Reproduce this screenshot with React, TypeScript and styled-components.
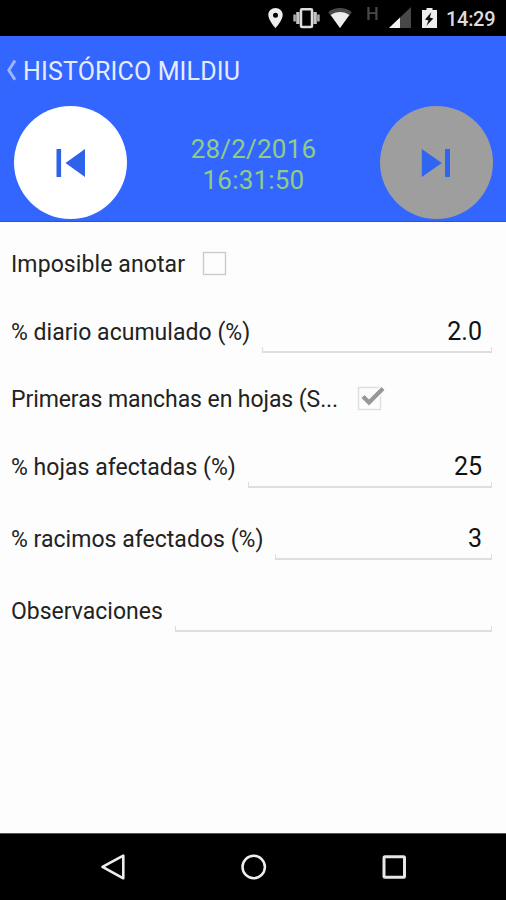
import React from "react";
import styled, { createGlobalStyle } from "styled-components";

const GlobalStyle = createGlobalStyle`
  *, *::before, *::after { box-sizing: border-box; }
  body { margin: 0; background: #fdfdfd; font-family: Roboto, sans-serif; }
`;

const Screen = styled.div`
  display: flex;
  flex-direction: column;
  width: 506px;
  height: 900px;
  overflow: hidden;
  background: #fdfdfd;
`;

const StatusBar = styled.header`
  display: flex;
  align-items: flex-start;
  justify-content: flex-end;
  height: 36px;
  padding: 7px 10px 0 0;
  background: #000;
`;

const StatusIcon = styled.svg<{ $gap: number }>`
  display: block;
  flex: none;
  margin-right: ${(p) => p.$gap}px;
`;

const NetworkType = styled.span`
  width: 13px;
  margin: -2px 10px 0 0;
  color: #484848;
  font-size: 18px;
  font-weight: 500;
  line-height: 17px;
`;

const Clock = styled.time`
  width: 50px;
  color: #dcdcdc;
  font-size: 20px;
  font-weight: 500;
  line-height: 24px;
  white-space: nowrap;
  letter-spacing: -0.3px;
`;

const AppHeader = styled.section`
  flex: none;
  height: 186px;
  background: #3366ff;
  border-bottom: 1px solid #1558f2;
`;

const TitleBar = styled.div`
  display: flex;
  align-items: center;
  height: 70px;
  padding-left: 5px;
`;

const Title = styled.h1`
  margin: 0 0 0 6px;
  color: #e6ecff;
  font-size: 25px;
  font-weight: 400;
  line-height: 30px;
  letter-spacing: 0.15px;
  padding-top: 1px;
  white-space: nowrap;
`;

const Pager = styled.div`
  display: flex;
  align-items: center;
  justify-content: space-between;
  height: 113px;
  padding: 0 13px 0 14px;
`;

const RoundButton = styled.button<{ $color: string }>`
  display: flex;
  align-items: center;
  justify-content: center;
  width: 113px;
  height: 113px;
  padding: 0;
  border: 0;
  border-radius: 50%;
  background: ${(p) => p.$color};
`;

const Timestamp = styled.div`
  color: #92cc83;
  font-size: 26px;
  line-height: 31px;
  letter-spacing: 0.2px;
  text-align: center;
  padding-top: 4px;
`;

const Form = styled.main`
  display: flex;
  flex: 1;
  flex-direction: column;
  padding: 8px 14px 0 11px;
`;

const Row = styled.div<{ $height: number }>`
  display: flex;
  align-items: center;
  height: ${(p) => p.$height}px;
`;

const Label = styled.label<{ $width: number; $spacing: number }>`
  flex: none;
  width: ${(p) => p.$width}px;
  padding-top: 2px;
  color: #222;
  font-size: 23px;
  line-height: 28px;
  letter-spacing: ${(p) => p.$spacing}px;
  white-space: nowrap;
`;

const Field = styled.div`
  display: flex;
  flex: 1;
  flex-direction: column;
  height: 42px;
`;

const Value = styled.span`
  flex: 1;
  padding-right: 10px;
  color: #111;
  font-size: 25px;
  line-height: 42px;
  text-align: right;
`;

const Underline = styled.div`
  flex: none;
  height: 6px;
  margin-top: -6px;
  border: 1px solid #dcdcdc;
  border-top: 0;
  border-bottom-width: 2px;
  border-bottom-color: #dedede;
`;

const NavigationBar = styled.nav`
  display: flex;
  align-items: flex-start;
  justify-content: space-between;
  height: 67px;
  padding: 20px 99px 0 100px;
  background: #000;
  border-top: 1px solid #555;
`;

const PinIcon = () => (
  <StatusIcon $gap={10} width="15" height="22" viewBox="0 0 15 22">
    <path fill="#eee" fillRule="evenodd" d="M7.5 1C3.5 1 .3 4.1.3 8c0 5.2 7.2 13.2 7.2 13.2S14.7 13.2 14.7 8c0-3.9-3.2-7-7.2-7Zm0 4.7a2.5 2.5 0 1 1 0 5 2.5 2.5 0 0 1 0-5Z" />
  </StatusIcon>
);

const VibrateIcon = () => (
  <StatusIcon $gap={8} width="27" height="22" viewBox="0 0 27 22">
    <rect x="8" y="2.3" width="11" height="17.6" rx="1" fill="none" stroke="#ddd" strokeWidth="2.5" />
    <path d="M4.9 5v12M22.1 5v12" stroke="#c4c4c4" strokeWidth="3.4" />
    <path d="M1.6 7.5v7M25.4 7.5v7" stroke="#aaa" strokeWidth="2.6" />
  </StatusIcon>
);

const WifiIcon = () => (
  <StatusIcon $gap={14} width="24" height="22" viewBox="0 0 24 22">
    <path fill="#4a4a4a" d="M.2 5.2C7-.4 17-.4 23.8 5.2L12 21Z" />
    <path fill="#eee" d="M2.7 8.1c5.5-4.3 13.1-4.3 18.6 0L12 20.9Z" />
  </StatusIcon>
);

const SignalIcon = () => (
  <StatusIcon $gap={11} width="22" height="22" viewBox="0 0 22 22">
    <path fill="#484848" d="M22 0v21H0Z" />
    <path fill="#f4f4f4" d="M11 10.5V21H0Z" />
  </StatusIcon>
);

const BatteryIcon = () => (
  <StatusIcon $gap={9} width="15" height="22" viewBox="0 0 15 22">
    <path fill="#eee" d="M4.5 1h6v2H15v18H0V3h4.5Z" />
    <path fill="#111" d="M9.3 5.3 3 12.5l3.5.9-2.1 5.3 7-7.2-3.6-.9Z" />
  </StatusIcon>
);

const BackChevron = () => (
  <svg width="12" height="24" viewBox="0 0 12 24">
    <path d="M10 1.5 3.8 11.3l6.2 9.5" fill="none" stroke="#9db5fb" strokeWidth="3" />
  </svg>
);

const PreviousIcon = () => (
  <svg width="30" height="28" viewBox="0 0 30 28">
    <path fill="#2f62ea" d="M.5 0h4.6v28H.5ZM29 0v28L9.5 14Z" />
  </svg>
);

const NextIcon = () => (
  <svg width="30" height="28" viewBox="0 0 30 28">
    <path fill="#2f65ef" d="M.8 0v28l20-14ZM24 0h5v28h-5Z" />
  </svg>
);

const Checkbox = ({ checked = false }: { checked?: boolean }) => (
  <svg width="28" height="28" viewBox="0 0 28 28" role="checkbox" aria-checked={checked}>
    <rect x="1.5" y="2.5" width="22" height="22" fill="none" stroke={checked ? "#dedede" : "#cbcbcb"} strokeWidth="1.4" />
    {checked && (
      <>
        <path d="m6 11.6 6 6L26 3.5" fill="none" stroke="#fdfdfd" strokeWidth="7" />
        <path d="m6 11.6 6 6L26 3.5" fill="none" stroke="#989898" strokeWidth="4.2" />
      </>
    )}
  </svg>
);

interface Entry {
  label: string;
  width: number;
  height: number;
  spacing: number;
  value?: string;
  checked?: boolean;
}

const entries: Entry[] = [
  { label: "Imposible anotar", width: 191, height: 68, spacing: 0.1, checked: false },
  { label: "% diario acumulado (%)", width: 251, height: 68, spacing: 0.03, value: "2.0" },
  { label: "Primeras manchas en hojas (S...", width: 346, height: 65, spacing: -0.08, checked: true },
  { label: "% hojas afectadas (%)", width: 237, height: 72, spacing: 0.03, value: "25" },
  { label: "% racimos afectados (%)", width: 264, height: 72, spacing: 0.03, value: "3" },
  { label: "Observaciones", width: 164, height: 72, spacing: 0, value: "" },
];

export default function App() {
  return (
    <>
      <GlobalStyle />
      <Screen>
        <StatusBar>
          <PinIcon />
          <VibrateIcon />
          <WifiIcon />
          <NetworkType>H</NetworkType>
          <SignalIcon />
          <BatteryIcon />
          <Clock>14:29</Clock>
        </StatusBar>
        <AppHeader>
          <TitleBar>
            <BackChevron />
            <Title>HISTÓRICO MILDIU</Title>
          </TitleBar>
          <Pager>
            <RoundButton $color="#fff" aria-label="Anterior">
              <PreviousIcon />
            </RoundButton>
            <Timestamp>
              28/2/2016
              <br />
              16:31:50
            </Timestamp>
            <RoundButton $color="#9e9e9e" aria-label="Siguiente">
              <NextIcon />
            </RoundButton>
          </Pager>
        </AppHeader>
        <Form>
          {entries.map((entry) => (
            <Row key={entry.label} $height={entry.height}>
              <Label $width={entry.width} $spacing={entry.spacing}>
                {entry.label}
              </Label>
              {entry.value === undefined ? (
                <Checkbox checked={entry.checked} />
              ) : (
                <Field>
                  <Value>{entry.value}</Value>
                  <Underline />
                </Field>
              )}
            </Row>
          ))}
        </Form>
        <NavigationBar>
          <svg width="26" height="28" viewBox="0 0 26 28">
            <path d="M23.3 1.7v22.6L2.5 12.9Z" fill="none" stroke="#eee" strokeWidth="2.6" strokeLinejoin="round" />
          </svg>
          <svg width="26" height="28" viewBox="0 0 26 28">
            <circle cx="12.7" cy="13" r="11.2" fill="none" stroke="#eee" strokeWidth="2.5" />
          </svg>
          <svg width="26" height="28" viewBox="0 0 26 28">
            <rect x="3" y="2.7" width="20.5" height="20.5" rx="1" fill="none" stroke="#e6e6e6" strokeWidth="3" />
          </svg>
        </NavigationBar>
      </Screen>
    </>
  );
}
